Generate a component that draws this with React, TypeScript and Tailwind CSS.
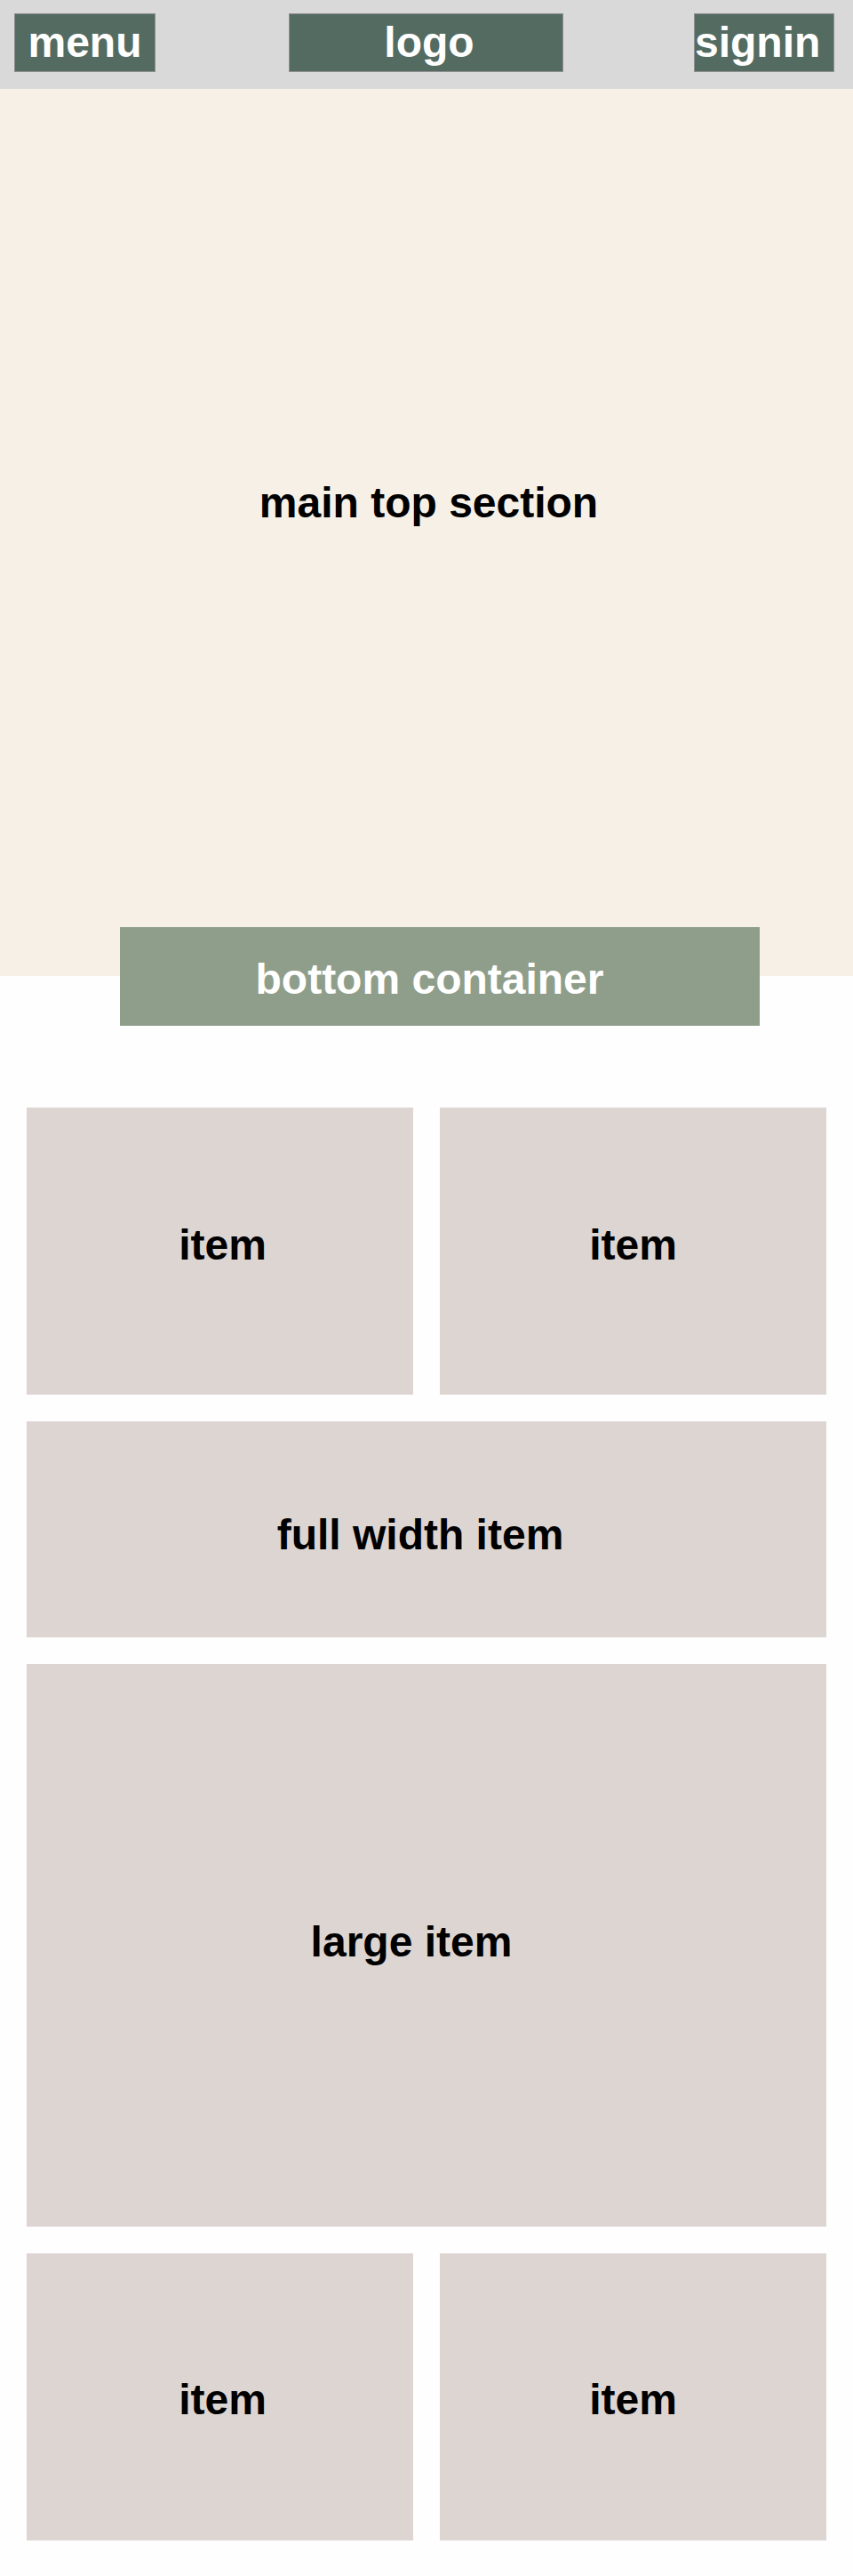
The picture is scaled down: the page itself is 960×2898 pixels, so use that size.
import React from "react";

const font = { fontFamily: '"Liberation Sans", Arial, sans-serif' };

function Item({ label, className }: { label: string; className: string }) {
  return (
    <div className={`bg-[#ddd5d2] flex items-center justify-center ${className}`}>
      <span className="text-[48px] font-bold text-black leading-normal">{label}</span>
    </div>
  );
}

export default function App() {
  return (
    <div className="w-[960px] min-h-[2898px] bg-[#fefefe]" style={font}>
      <header className="h-[100px] bg-[#d9d9d9] flex items-start pt-[15px] pl-[16px]">
        <div className="w-[159px] h-[66px] bg-[#546b62] border border-[#8e8e8e] flex items-center justify-center">
          <span className="text-[48px] font-bold text-white leading-normal">menu</span>
        </div>
        <div className="ml-[150px] w-[309px] h-[66px] bg-[#546b62] border border-[#8e8e8e] flex items-center justify-center pl-[7px]">
          <span className="text-[48px] font-bold text-white leading-normal">logo</span>
        </div>
        <div className="ml-[147px] w-[158px] h-[66px] bg-[#546b62] border border-[#8e8e8e] flex items-center justify-start">
          <span className="text-[48px] font-bold text-white leading-normal whitespace-nowrap">signin</span>
        </div>
      </header>

      <main className="h-[998px] bg-[#f7f0e7] flex items-center justify-center pb-[67px] pl-[5px]">
        <h1 className="text-[48px] font-bold text-black leading-normal">main top section</h1>
      </main>

      <div className="relative -mt-[55px] ml-[135px] w-[720px] h-[111px] bg-[#8f9e8a] flex justify-center pt-[23px] pr-[23px]">
        <span className="text-[48px] font-bold text-white leading-normal">bottom container</span>
      </div>

      <div className="mt-[92px] px-[30px] pb-[40px] grid grid-cols-2 gap-[30px]">
        <Item label="item" className="h-[323px] pb-[13px] pl-[6px]" />
        <Item label="item" className="h-[323px] pb-[13px]" />
        <Item label="full width item" className="col-span-2 h-[243px] pt-[12px] pr-[14px]" />
        <Item label="large item" className="col-span-2 h-[633px] pb-[7px] pr-[34px]" />
        <Item label="item" className="h-[323px] pt-[7px] pl-[6px]" />
        <Item label="item" className="h-[323px] pt-[7px]" />
      </div>
    </div>
  );
}
